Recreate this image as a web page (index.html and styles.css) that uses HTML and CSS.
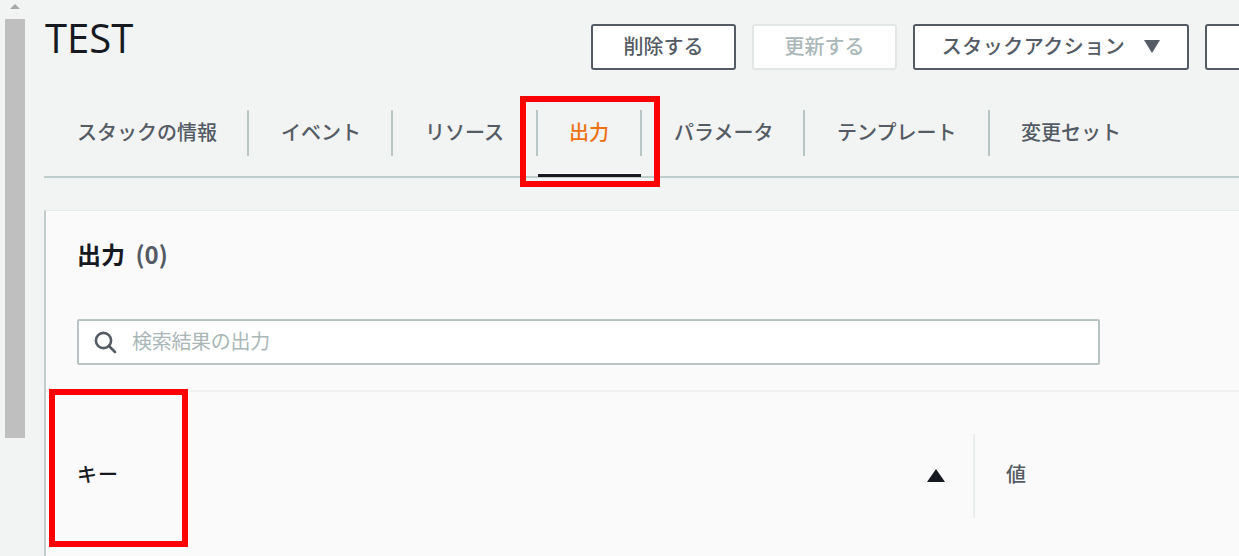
FILE: index.html
```html
<!DOCTYPE html>
<html lang="ja">
<head>
<meta charset="utf-8">
<title>TEST</title>
<link rel="stylesheet" href="styles.css">
</head>
<body>
<div class="app">
  <div class="scrollbar">
    <span class="scroll-up"></span>
    <div class="scroll-thumb"></div>
  </div>
  <main class="main">
    <header class="head">
      <h1 class="title">TEST</h1>
      <div class="actions">
        <button class="btn btn-m">削除する</button>
        <button class="btn btn-m btn-off">更新する</button>
        <button class="btn btn-l"><span class="btn-label">スタックアクション</span><span class="caret"></span></button>
        <button class="btn btn-m"></button>
      </div>
    </header>
    <nav class="tabs">
      <a class="tab t1">スタックの情報</a>
      <a class="tab t2">イベント</a>
      <a class="tab t3">リソース</a>
      <a class="tab t4 active">出力</a>
      <a class="tab t5">パラメータ</a>
      <a class="tab t6">テンプレート</a>
      <a class="tab t7">変更セット</a>
    </nav>
    <section class="card">
      <h2 class="card-title">出力 <span class="count">(0)</span></h2>
      <div class="search">
        <svg class="search-icon" width="24" height="24" viewBox="0 0 24 24" fill="none" stroke="#545b64" stroke-width="2.6">
          <circle cx="10.5" cy="10.5" r="7.6"/>
          <path d="M16 16l6 6" stroke-linecap="round"/>
        </svg>
        <span class="placeholder">検索結果の出力</span>
      </div>
      <div class="table-head">
        <div class="col-key"><span class="key-label">キー</span><span class="sort"></span></div>
        <div class="col-val">値</div>
      </div>
    </section>
  </main>
</div>
<div class="mark mark-tab"></div>
<div class="mark mark-key"></div>
</body>
</html>
```
FILE: styles.css
```css
* { box-sizing: border-box; }
html, body { margin: 0; height: 100%; overflow: hidden; }
body {
  background: #f2f3f3;
  color: #16191f;
  font-family: "Open Sans", "Noto Sans CJK JP", sans-serif;
}
.app { display: flex; width: 1239px; height: 556px; overflow: hidden; }

.scrollbar {
  flex: 0 0 44px;
  padding: 4px 0 0 5px;
}
.scroll-up {
  display: block;
  width: 0;
  height: 0;
  margin-left: 5px;
  border-left: 5px solid transparent;
  border-right: 5px solid transparent;
  border-bottom: 5px solid #a6a6a6;
}
.scroll-thumb {
  width: 20px;
  height: 419px;
  margin-top: 10px;
  background: #bfbfbf;
}

.main { flex: 1 1 auto; min-width: 0; }

.head {
  display: flex;
  justify-content: space-between;
  height: 87px;
  padding-top: 24px;
}
.title {
  margin: -9px 0 0 1px;
  font-size: 40px;
  font-weight: 400;
  line-height: 46px;
}
.actions {
  display: flex;
  gap: 16px;
  flex: 0 0 auto;
  margin-right: -111px;
}
.btn {
  height: 46px;
  padding: 0 0 2px;
  background: #fff;
  border: 2px solid #545b64;
  border-radius: 3px;
  color: #545b64;
  font: 500 20px/1 "Noto Sans CJK JP", sans-serif;
  display: flex;
  align-items: center;
  justify-content: center;
}
.btn-m { width: 145px; }
.btn-l { width: 276px; }
.btn-off { border-color: #e2e6e6; color: #aab7b8; }
.btn-label { letter-spacing: 0.5px; }
.caret {
  margin-left: 19px;
  width: 0;
  height: 0;
  border-left: 8px solid transparent;
  border-right: 8px solid transparent;
  border-top: 13px solid #545b64;
}

.tabs {
  display: flex;
  height: 91px;
  padding: 23px 0 0 0;
  border-bottom: 2px solid #c1cccc;
  align-items: flex-start;
}
.tab {
  position: relative;
  height: 67px;
  padding-top: 7px;
  font: 500 20px/30px "Noto Sans CJK JP", sans-serif;
  color: #545b64;
  white-space: nowrap;
}
.tab::after {
  content: "";
  position: absolute;
  top: 0;
  right: 0;
  width: 2px;
  height: 46px;
  background: #b9c4c4;
}
.t1 { width: 205px; padding-left: 33px; }
.t2 { width: 144px; padding-left: 32px; }
.t3 { width: 145px; padding-left: 32px; }
.t4 { width: 104px; padding-left: 31px; }
.t5 { width: 163px; padding-left: 32px; }
.t6 { width: 185px; padding-left: 32px; }
.t7 { padding-left: 31px; }
.t7::after { display: none; }
.tab.active { color: #ec7211; }
.tab.active::before {
  content: "";
  position: absolute;
  left: 0;
  right: 1px;
  bottom: 0;
  height: 3px;
  background: #16191f;
  box-shadow: 0 -1px 0 #fff;
}

.card {
  margin-top: 32px;
  height: 346px;
  background: #fafafa;
  border-left: 2px solid #c1cccc;
  border-top: 1px solid #e6eaea;
}
.card-title {
  margin: 0;
  padding: 25px 0 0 31px;
  height: 108px;
  font: 700 24px/36px "Noto Sans CJK JP", sans-serif;
  color: #16191f;
}
.count { color: #545b64; font-size: 24px; margin-left: 5px; }
.search {
  margin-left: 31px;
  width: 1023px;
  height: 46px;
  display: flex;
  align-items: center;
  padding-left: 14px;
  background: #fff;
  border: 2px solid #b8c4c4;
  border-radius: 2px;
}
.search-icon { flex: 0 0 auto; }
.placeholder {
  margin: 0 0 2px 15px;
  font: 400 20px/1 "Noto Sans CJK JP", sans-serif;
  letter-spacing: -0.3px;
  color: #aab7b8;
}
.table-head {
  margin-top: 25px;
  height: 127px;
  padding-top: 42px;
  border-top: 2px solid #eff1f1;
  display: flex;
  align-items: flex-start;
}
.col-key {
  flex: 0 0 929px;
  height: 84px;
  padding: 0 28px 0 31px;
  border-right: 2px solid #eaeded;
  display: flex;
  justify-content: space-between;
  align-items: center;
  font: 500 20px/1 "Noto Sans CJK JP", sans-serif;
  color: #16191f;
}
.key-label { margin-top: -4px; letter-spacing: 1px; }
.sort {
  width: 0;
  height: 0;
  border-left: 9px solid transparent;
  border-right: 9px solid transparent;
  border-bottom: 13px solid #16191f;
  margin-top: -1px;
}
.col-val {
  height: 84px;
  padding: 0 0 4px 31px;
  display: flex;
  align-items: center;
  font: 500 20px/1 "Noto Sans CJK JP", sans-serif;
  color: #545b64;
}

.mark {
  position: absolute;
  border: 6px solid #ff0000;
}
.mark-tab { left: 520px; top: 96px; width: 140px; height: 91px; }
.mark-key { left: 49px; top: 389px; width: 139px; height: 158px; }
```
